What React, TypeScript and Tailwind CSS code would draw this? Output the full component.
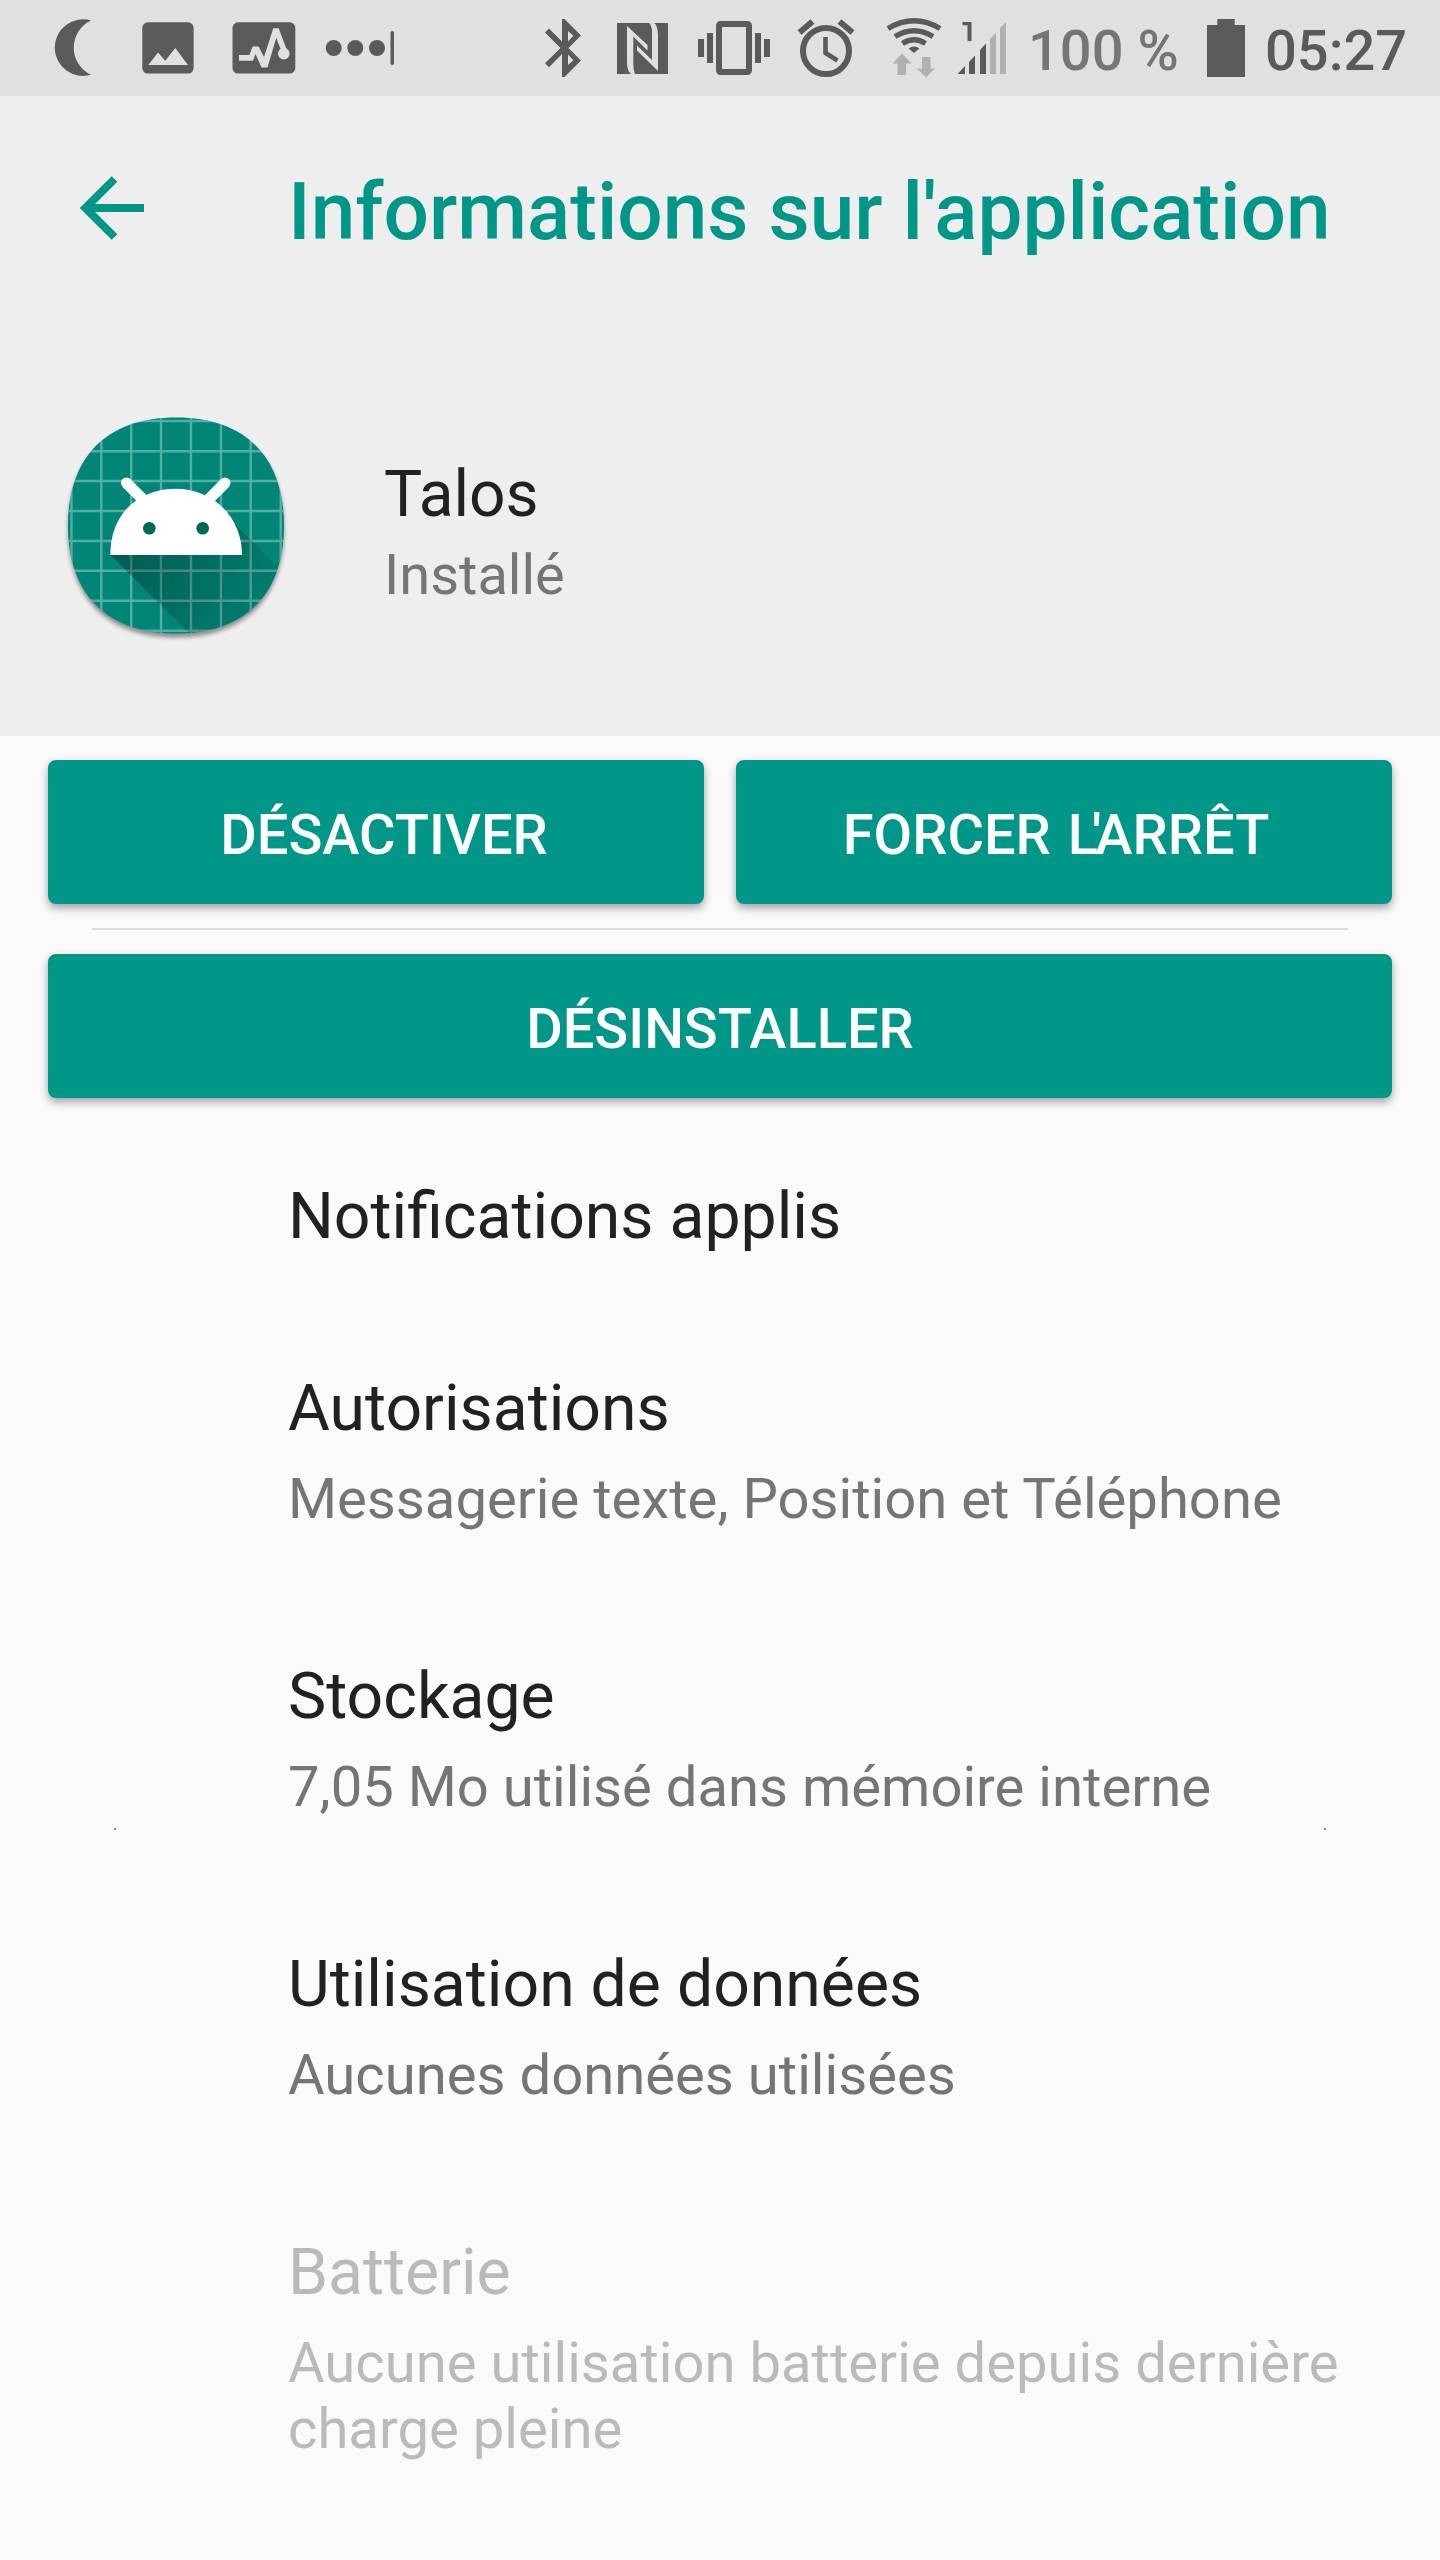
import type { ReactNode } from "react";

const rows = [
  { title: "Notifications applis" },
  {
    title: "Autorisations",
    summary: "Messagerie texte, Position et Téléphone",
  },
  { title: "Stockage", summary: "7,05 Mo utilisé dans mémoire interne" },
  { title: "Utilisation de données", summary: "Aucunes données utilisées" },
  {
    title: "Batterie",
    summary: "Aucune utilisation batterie depuis dernière charge pleine",
    disabled: true,
  },
];

// Left and right groups of the status bar, one drawing for each
function NotificationIcons() {
  return (
    <svg width="480" height="96" viewBox="0 0 480 96" fill="#5a5a5a">
      <path d="M91 20.5A28.3 28.3 0 1 0 91 74.8A30 30 0 0 1 91 20.5Z" />
      <rect x="142.3" y="22.3" width="51.3" height="51.3" rx="5.5" />
      <path
        d="M148.3 65L158 52.5L165.3 60.7L175.3 48L188 65Z"
        fill="#e0e0e0"
      />
      <rect x="232.5" y="22.3" width="62.8" height="51.3" rx="5.5" />
      <path
        d="M239 55H249.3L252.7 46.5H258.5L264 57L273.3 28.3H278.7L286.5 49L281.5 51L276.2 38L267.5 67.5H261.5L255.5 54L253 60.7H239Z"
        fill="#e0e0e0"
      />
      <circle cx="283.8" cy="53.7" r="5.8" fill="#e0e0e0" />
      <circle cx="333.7" cy="48" r="8" />
      <circle cx="355.3" cy="48" r="8" />
      <circle cx="377" cy="48" r="8" />
      <rect x="390.5" y="31" width="3.5" height="34" rx="1.7" />
    </svg>
  );
}

function SystemIcons() {
  return (
    <svg width="530" height="96" viewBox="480 0 530 96" fill="#5a5a5a">
      <path
        d="M562 19H564.5L581 35.5L568.5 48L581 60.5L564.5 77H562V54L549 67.3L545 63.3L560.5 48L545 32.5L549 28.5L562 41.5ZM568 31V41.5L573.3 35.7ZM568 54.5V65L573.3 60.3Z"
        fillRule="evenodd"
      />
      <rect x="617" y="23" width="51" height="51" />
      <path
        d="M627 26L647.5 45V50.5L633.3 36.5V64Q633.3 70 635 74H631Q627 71 627 62Z"
        fill="#e0e0e0"
      />
      <path
        d="M658 71L637 50.5V45.5L652 60V33Q652 26 649 22.5H653.5Q658 25 658 36Z"
        fill="#e0e0e0"
      />
      <rect x="698" y="39" width="6" height="18" />
      <rect x="707" y="33" width="6" height="30" />
      <rect
        x="719"
        y="24"
        width="30"
        height="48"
        rx="1.5"
        fill="none"
        stroke="#5a5a5a"
        strokeWidth="6"
      />
      <rect x="755" y="33" width="6" height="30" />
      <rect x="764" y="39" width="6" height="18" />
      <g fill="none" stroke="#5a5a5a">
        <circle cx="826" cy="51" r="23" strokeWidth="6" />
        <path
          d="M799.5 32.5L812.5 21.5M839.5 21.5L852.5 32.5"
          strokeWidth="6"
        />
        <path d="M825.5 37V53L837.5 60.5" strokeWidth="4.6" />
      </g>
      <g fill="none" stroke="#5a5a5a" strokeWidth="5.2">
        <path d="M888 28.5Q914 13 940 28.5" />
        <path d="M895 36.5Q914 25 933 36.5" />
        <path d="M902.5 43.5Q914 36 925.5 43.5" />
      </g>
      <path d="M908.5 48.5Q914 44.5 919.5 48.5L914 53Z" />
      <g fill="#b0b0b0">
        <path d="M902 53.5L911.5 63.5H906V75H897.5V63.5H892.5Z" />
        <path d="M926 77.5L917 68.5H922V57H930.5V68.5H935Z" />
      </g>
      <path d="M962.5 22H971.5V41H967.5V25.3H962.5Z" />
      <path d="M957.5 74L965 66V74ZM969 62L975 55.5V74H969ZM980 50L986 43.5V74H980Z" />
      <path d="M990 39L996 32.5V74H990ZM1000 28L1006 22V74H1000Z" fill="#b0b0b0" />
    </svg>
  );
}

function BatteryIcon() {
  return (
    <svg width="38" height="58" viewBox="0 0 38 58" fill="#5a5a5a">
      <path d="M10.3 0H27.7V6H38V58H0V6H10.3Z" />
    </svg>
  );
}

function AppIcon() {
  const shape =
    "M136 27.5C205 27.5 244 66.5 244 135.5C244 204.5 205 243.5 136 243.5C67 243.5 28 204.5 28 135.5C28 66.5 67 27.5 136 27.5Z";

  return (
    <svg width="280" height="280" viewBox="0 0 280 280">
      <defs>
        <clipPath id="shape">
          <path d={shape} />
        </clipPath>
        <linearGradient
          id="shade"
          x1="80"
          y1="130"
          x2="215"
          y2="235"
          gradientUnits="userSpaceOnUse"
        >
          <stop offset="0.15" stopOpacity="0.3" />
          <stop offset="1" stopOpacity="0.05" />
        </linearGradient>
        <filter id="blur">
          <feGaussianBlur stdDeviation="2" />
        </filter>
      </defs>
      <path
        d={shape}
        transform="translate(0 4)"
        opacity="0.4"
        filter="url(#blur)"
      />
      <g clipPath="url(#shape)">
        <rect x="20" y="20" width="240" height="240" fill="#008577" />
        <path
          d="M31.5 20V260M61.3 20V260M91.2 20V260M121 20V260M151 20V260M181 20V260M210.7 20V260M240.7 20V260M20 31H260M20 61.3H260M20 91H260M20 121H260M20 151H260M20 180.7H260M20 210.7H260M20 240.7H260"
          stroke="#ffffff"
          strokeOpacity="0.33"
          strokeWidth="2.4"
        />
        <path d="M70.5 165L174 268H280V220L190 129Z" fill="url(#shade)" />
      </g>
      <path
        d="M86.5 93L102 108.5M185 93L169.5 108.5"
        stroke="#ffffff"
        strokeWidth="11"
        strokeLinecap="round"
      />
      <path
        d="M70.3 165C70.3 122 100 98.7 136 98.7C172 98.7 202 126 202 165Z"
        fill="#ffffff"
      />
      <circle cx="109.3" cy="138.3" r="6.3" fill="#00675b" />
      <circle cx="162.7" cy="138.3" r="6.3" fill="#00675b" />
    </svg>
  );
}

function Button({
  children,
  className = "",
}: {
  children: ReactNode;
  className?: string;
}) {
  return (
    <button
      className={`flex h-36 flex-1 items-center justify-center rounded-lg bg-[#009688] pt-1.5 text-[56px] leading-[66px] font-medium text-white shadow-[0_4px_8px_rgba(0,0,0,0.36)] ${className}`}
    >
      <span>{children}</span>
    </button>
  );
}

export default function App() {
  return (
    <div className="flex h-[2560px] w-[1440px] flex-col overflow-hidden bg-[#fafafa] font-['Roboto',sans-serif] text-[#212121]">
      {/* Status bar */}
      <div className="flex h-24 shrink-0 items-center bg-[#e0e0e0] text-[56px] leading-none font-medium text-[#5a5a5a]">
        <NotificationIcons />
        <SystemIcons />
        <span className="w-[197px] pt-1.5 pl-[18px] whitespace-nowrap text-[#757575]">
          100 %
        </span>
        <BatteryIcon />
        <span className="pt-1.5 pl-5">05:27</span>
      </div>

      <header className="flex h-[640px] shrink-0 flex-col bg-[#eeeeee]">
        <div className="flex h-56 items-center">
          <div className="w-72 pl-20">
            <svg
              width="65"
              height="64"
              viewBox="0 0 65 64"
              fill="none"
              stroke="#009688"
              strokeWidth="8"
            >
              <path d="M64 32H8M34.5 3L5.5 32L34.5 61" />
            </svg>
          </div>
          <h1 className="pt-2 text-[80.1px] leading-[80px] font-medium text-[#009688]">
            Informations sur l'application
          </h1>
        </div>
        <div className="flex pt-[70px] pl-10">
          <AppIcon />
          <div className="pt-[67px] pl-16">
            <p className="text-[64px] leading-[75px]">Talos</p>
            <p className="pt-2.5 text-[56px] leading-[66px] text-[#757575]">
              Installé
            </p>
          </div>
        </div>
      </header>

      <div className="flex shrink-0 flex-col px-12 pt-6">
        <div className="flex gap-8">
          <Button className="pl-4">DÉSACTIVER</Button>
          <Button className="pr-4">
            FORCER <span className="ml-[3px] tracking-[-6px]">L'</span>ARRÊT
          </Button>
        </div>
        <div className="mx-11 my-6 h-0.5 bg-[#dedede]" />
        <div className="flex">
          <Button>DÉSINSTALLER</Button>
        </div>
      </div>

      <div className="relative flex flex-col pt-[22px] pr-14 pl-72">
        {rows.map((row) => (
          <div
            key={row.title}
            className={
              row.disabled
                ? "min-h-72 pt-[54px] text-[#bababa]"
                : row.summary
                  ? "h-72 pt-[54px]"
                  : "h-48 pt-[54px]"
            }
          >
            <h2 className="text-[64.3px] leading-[85px]">{row.title}</h2>
            {row.summary && (
              <p
                className={
                  row.disabled
                    ? "pt-[15px] text-[56.2px] leading-[66px]"
                    : "pt-[15px] text-[56.2px] leading-[66px] text-[#757575]"
                }
              >
                {row.summary}
              </p>
            )}
          </div>
        ))}
        <span className="absolute top-[730px] left-[114px] size-0.5 bg-[#2fa4f5]" />
        <span className="absolute top-[730px] left-[1324px] size-0.5 bg-[#2fa4f5]" />
      </div>
    </div>
  );
}
